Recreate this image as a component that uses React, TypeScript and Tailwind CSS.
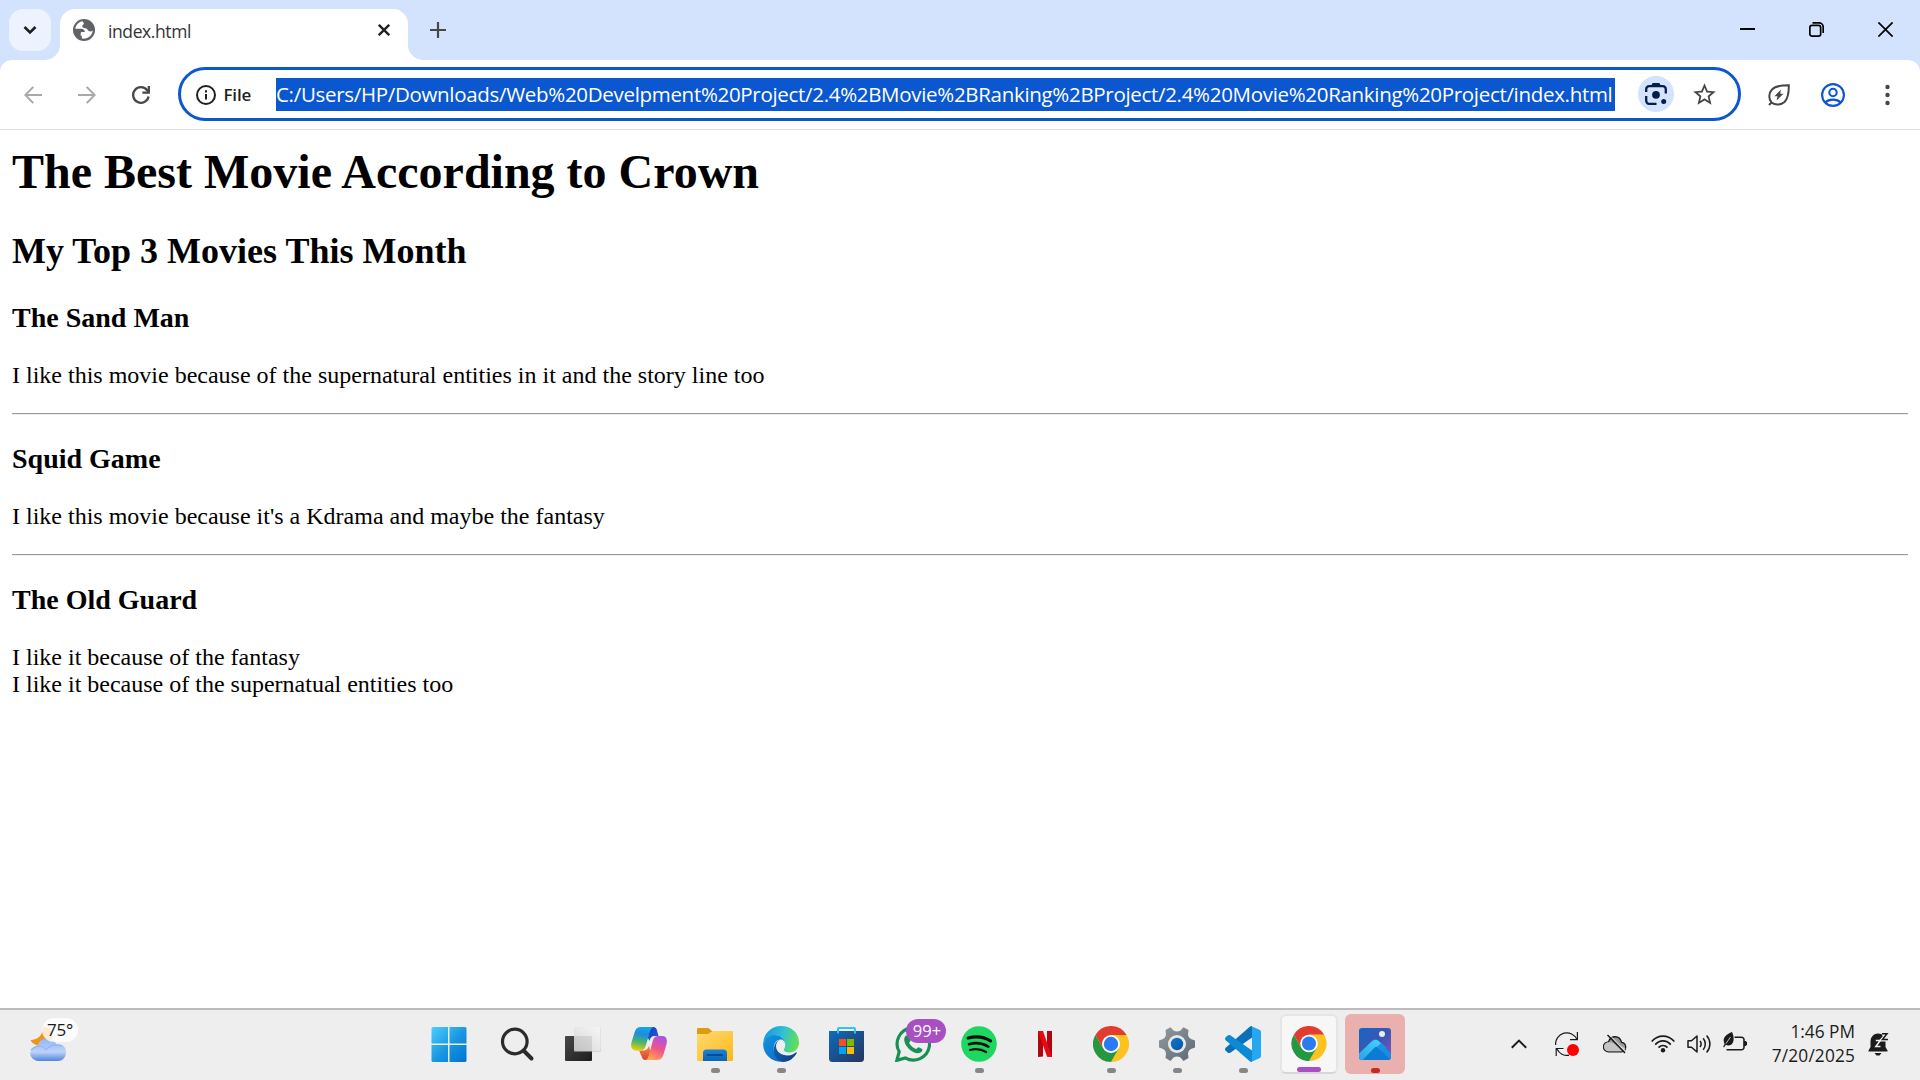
import React from "react";
import { MdStarBorder } from "react-icons/md";

const UI = "font-['Open_Sans','Noto_Sans',sans-serif]";

function GlobeIcon() {
  return (
    <svg className="mb-[9px] ml-[13px]" width="22" height="22" viewBox="0 0 22 22">
      <circle cx="11" cy="11" r="11" fill="#5f6368" />
      <path d="M9.500 2.200C5.500 2.900 2.700 6 2.300 9.800H7.800C10.500 9.800 12 11.400 11.800 13H8.800C8 13 7.700 13.600 7.700 14.500V16C7.700 16.600 8.200 16.800 8.800 16.800V19.500C14.500 20.500 19.300 16.800 19.700 11.500C18 12.900 15.500 12.600 14.800 11C14 9.200 12.500 9.600 10.900 9C8.800 8 8.900 6.200 10.300 5.500C11.700 4.900 10.500 3.500 9.500 2.200Z" fill="#fff" />
    </svg>
  );
}

function TabStrip() {
  return (
    <div className="flex h-[60px] bg-[#d3e3fd]">
      <div className="ml-[9px] mt-[9px] flex size-[42px] items-center justify-center rounded-[14px] bg-[#ecf2fe]">
        <svg width="14" height="10" viewBox="0 0 14 10" fill="none" stroke="#1f1f1f" strokeWidth="2.6">
          <path d="M1.5 2 7 7.5 12.5 2" />
        </svg>
      </div>
      <div className="relative ml-[9px] mt-[9px] flex h-[51px] w-[348px] items-center rounded-t-[15px] bg-white">
        <svg className="absolute -left-[15px] bottom-0" width="15" height="15" viewBox="0 0 15 15">
          <path d="M15 0V15H0A15 15 0 0 0 15 0Z" fill="#fff" />
        </svg>
        <svg className="absolute -right-[15px] bottom-0" width="15" height="15" viewBox="0 0 15 15">
          <path d="M0 0V15H15A15 15 0 0 1 0 0Z" fill="#fff" />
        </svg>
        <GlobeIcon />
        <span className={`${UI} mb-[7px] ml-[13px] flex-1 text-[17.5px] leading-6 tracking-[-0.4px] text-[#333]`}>
          index.html
        </span>
        <svg className="mb-[9px] mr-[18px]" width="12" height="12" viewBox="0 0 12 12" stroke="#1f1f1f" strokeWidth="2.3">
          <path d="M.8.8 11.2 11.2M11.2.8.8 11.2" />
        </svg>
      </div>
      <svg className="ml-[22px] mt-[22px]" width="16" height="16" viewBox="0 0 16 16" stroke="#474747" strokeWidth="2.2">
        <path d="M8 0V16M0 8H16" />
      </svg>
      <div className="ml-auto flex pr-[27px] pt-[22px]">
        <svg className="mr-[54px]" width="15" height="15" viewBox="0 0 15 15" stroke="#000" strokeWidth="2">
          <path d="M0 7H15" />
        </svg>
        <svg className="mr-[54px]" width="15" height="15" viewBox="0 0 15 15" fill="none" stroke="#000" strokeWidth="1.7">
          <rect x=".85" y="3.3" width="10.8" height="10.8" rx="2.2" />
          <path d="M3.5.9H10A4.2 4.2 0 0 1 14.2 5V11" />
        </svg>
        <svg width="15" height="15" viewBox="0 0 15 15" stroke="#000" strokeWidth="1.7">
          <path d="M.4.4 14.6 14.6M14.6.4.4 14.6" />
        </svg>
      </div>
    </div>
  );
}

function Toolbar() {
  return (
    <div className="h-[70px] bg-[#d3e3fd]">
      <div className="flex h-[70px] items-center rounded-t-[12px] border-b border-[#dfe1e5] bg-white">
        <svg className="ml-[24px]" width="18" height="18" viewBox="0 0 18 18" fill="none" stroke="#a8a8a8" strokeWidth="2">
          <path d="M18 9H1.6M9.3.9 1.3 9 9.3 17.1" />
        </svg>
        <svg className="ml-[36px]" width="18" height="18" viewBox="0 0 18 18" fill="none" stroke="#a8a8a8" strokeWidth="2">
          <path d="M0 9H16.4M8.7.9 16.7 9 8.7 17.1" />
        </svg>
        <svg className="ml-[36px]" width="18" height="18" viewBox="0 0 18 18" fill="none" stroke="#474747" strokeWidth="2.3">
          <path d="M16.6 10.6A7.8 7.8 0 1 1 15.2 4.3L17 6.4" />
          <path d="M16.8 0V6.7H10.4" />
        </svg>
        <div className="mb-[1px] ml-[28px] flex h-[54px] w-[1563px] items-center rounded-full border-[3px] border-[#0b57d0]">
          <svg className="ml-[15px] mt-[1px]" width="20" height="20" viewBox="0 0 20 20" fill="none" stroke="#1f1f1f" strokeWidth="2">
            <circle cx="10" cy="10" r="9" />
            <path d="M10 9V14.5M10 5.2V7.4" />
          </svg>
          <span className={`${UI} ml-[7.500px] mt-[1px] w-[52.500px] text-[17px] font-semibold leading-6 tracking-[-0.2px] text-[#1f1f1f]`}>File</span>
          <div className={`${UI} mt-[1px] h-[33px] w-[1339px] whitespace-nowrap bg-[#0b57d0] text-[20.5px] leading-[32px] tracking-[-0.31px] text-white`}>
            C:/Users/HP/Downloads/Web%20Develpment%20Project/2.4%2BMovie%2BRanking%2BProject/2.4%20Movie%20Ranking%20Project/index.html
          </div>
          <div className="ml-[23px] flex size-[36px] items-center justify-center rounded-full bg-[#d3e3fd]">
            <svg width="22" height="22" viewBox="0 0 22 22" fill="none" stroke="#041e49" strokeWidth="2.3">
              <path d="M1.2 9V6.2A3 3 0 0 1 4.2 3.2H17.8A3 3 0 0 1 20.8 6.2V10.5M1.2 13V17.8A3 3 0 0 0 4.2 20.8H11.5" />
              <path d="M7.5 2.2 8.3 1.2H13.7L14.5 2.2" />
              <circle cx="11" cy="11.8" r="3.9" fill="#041e49" stroke="none" />
              <circle cx="18.7" cy="18.4" r="2.5" fill="#041e49" stroke="none" />
            </svg>
          </div>
          <MdStarBorder className="ml-[16.500px] mt-[1px] size-[27px] text-[#474747]" />
        </div>
        <svg className="ml-[27px]" width="22" height="22" viewBox="0 0 22 22" fill="none" stroke="#474747" strokeWidth="2">
          <path d="M3.5 18.5C.5 15 .5 9 4 5.500C7 2.200 11 1.200 20.800 1.200C21 10 19.500 15 16.500 18C13 21.200 7 21.300 3.500 18.500ZM3.500 18.500 1 21" />
          <path d="M13 5.500 6.500 12.300H9.500L8.500 16.500 15.500 9.800H12.200Z" fill="#474747" stroke="none" />
        </svg>
        <svg className="ml-[31px]" width="24" height="24" viewBox="0 0 24 24" fill="none" stroke="#0b57d0" strokeWidth="2.1">
          <circle cx="12" cy="12" r="10.9" />
          <circle cx="12" cy="9.500" r="3.700" />
          <path d="M4.300 19.500C8 15.700 16 15.700 19.700 19.500" />
        </svg>
        <svg className="ml-[39.500px]" width="5" height="22" viewBox="0 0 5 22" fill="#474747">
          <circle cx="2.500" cy="3" r="2.200" />
          <circle cx="2.500" cy="11" r="2.200" />
          <circle cx="2.500" cy="19" r="2.200" />
        </svg>
      </div>
    </div>
  );
}

function Rule() {
  return <div className="mt-[24px] h-[2px] border-t border-b border-t-[#9a9a9a] border-b-[#eeeeee]" />;
}

function Movie({ title, children }: { title: string; children: React.ReactNode }) {
  return (
    <section>
      <h3 className="text-[28px] font-bold leading-[31px]">{title}</h3>
      <p className="mt-[29px] text-[24px] leading-[27px]">{children}</p>
    </section>
  );
}

function Page() {
  return (
    <main className="h-[878px] bg-white px-[12px] pt-[15px] font-['Liberation_Serif',serif] text-black">
      <h1 className="text-[48px] font-bold leading-[53px]">The Best Movie According to Crown</h1>
      <h2 className="mb-[31px] mt-[33px] text-[36px] font-bold leading-[40px]">My Top 3 Movies This Month</h2>
      <Movie title="The Sand Man">
        I like this movie because of the supernatural entities in it and the story line too
      </Movie>
      <Rule />
      <div className="h-[28px]" />
      <Movie title="Squid Game">I like this movie because it's a Kdrama and maybe the fantasy</Movie>
      <Rule />
      <div className="h-[28px]" />
      <Movie title="The Old Guard">
        I like it because of the fantasy
        <br />I like it because of the supernatual entities too
      </Movie>
    </main>
  );
}

function StartIcon() {
  return (
    <svg width="36" height="36" viewBox="0 0 36 36" className="-ml-[4px]">
      <defs>
        <linearGradient id="win" x1="0" y1="0" x2="36" y2="36" gradientUnits="userSpaceOnUse">
          <stop stopColor="#4fd0ff" />
          <stop offset=".55" stopColor="#1795e0" />
          <stop offset="1" stopColor="#0073d0" />
        </linearGradient>
      </defs>
      <path
        fill="url(#win)"
        d="M2 1H17V17.500H.500V2.500A1.500 1.500 0 0 1 2 1ZM18.500 1H34A1.500 1.500 0 0 1 35.500 2.500V17.500H18.500ZM.500 19H17V36H2A1.500 1.500 0 0 1 .500 34.500ZM18.500 19H35.500V34.500A1.500 1.500 0 0 1 34 36H18.500Z"
      />
    </svg>
  );
}

function SearchIcon() {
  return (
    <svg width="36" height="36" viewBox="0 0 36 36" fill="none" stroke="#2b2b2b" className="ml-[2px]">
      <circle cx="14.800" cy="15.500" r="12.300" strokeWidth="3.200" />
      <path d="M23.500 24.500 31.500 32.500" strokeWidth="4" strokeLinecap="round" />
    </svg>
  );
}

function TaskViewIcon() {
  return (
    <svg width="36" height="36" viewBox="0 0 36 36">
      <defs>
        <linearGradient id="tvd" x1="0" y1="0" x2="1" y2="1">
          <stop stopColor="#484848" />
          <stop offset="1" stopColor="#1d1d1d" />
        </linearGradient>
        <linearGradient id="tvl" x1="1" y1="0" x2="0" y2="1">
          <stop stopColor="#ffffff" />
          <stop offset="1" stopColor="#d8d8d8" />
        </linearGradient>
      </defs>
      <rect x="0" y="10" width="27" height="25" rx="1" fill="url(#tvd)" />
      <rect x="9" y="1" width="27" height="25" rx="1" fill="#bbb" opacity=".5" />
      <rect x="9" y="1" width="26.500" height="24" rx="1" fill="url(#tvl)" opacity=".78" />
    </svg>
  );
}

function CopilotIcon() {
  return (
    <svg width="36" height="36" viewBox="0 0 36 36">
      <defs>
        <linearGradient id="cpa" x1="12" y1="1" x2="8" y2="25" gradientUnits="userSpaceOnUse">
          <stop stopColor="#16a5e8" />
          <stop offset=".3" stopColor="#1c8de0" />
          <stop offset=".62" stopColor="#48b36c" />
          <stop offset="1" stopColor="#f4cf0a" />
        </linearGradient>
        <linearGradient id="cpb" x1="30" y1="10" x2="20" y2="34" gradientUnits="userSpaceOnUse">
          <stop stopColor="#a753e8" />
          <stop offset=".5" stopColor="#f0528a" />
          <stop offset="1" stopColor="#ffa84e" />
        </linearGradient>
        <linearGradient id="cpc" x1="0" y1="0" x2="1" y2="1">
          <stop stopColor="#1a35c0" />
          <stop offset="1" stopColor="#1a66dc" />
        </linearGradient>
        <linearGradient id="cpd" x1="0" y1="0" x2="0" y2="1">
          <stop stopColor="#f78a3a" />
          <stop offset="1" stopColor="#dd4038" />
        </linearGradient>
      </defs>
      <path d="M17 1H22C24.500 1 25.500 2.500 26 4.500L27.500 10H24C20.500 10 19.500 11.500 18.500 15L16 10Z" fill="url(#cpc)" />
      <path d="M8 24.500H12C15.500 24.500 17 23 18 19.500L19.500 26 16.500 34H14.500C12 34 11 32 10.500 30Z" fill="url(#cpd)" />
      <path d="M10 1H23.500C20.500 1 19.600 3.500 18.500 7L15 19C14 22.500 12.500 24.700 9 24.700H5.500C1 24.700-.800 21 .600 16L3.500 6.500C4.700 2.800 6.500 1 10 1Z" fill="url(#cpa)" />
      <path d="M26 34H13.500C16.500 34 17.300 31.500 18.200 28L21.500 16C22.500 12 23.700 10 27.500 10H31C35.500 10 36.700 13.500 35.400 18.500L32.500 28.500C31.300 32.200 29.500 34 26 34Z" fill="url(#cpb)" />
    </svg>
  );
}

function ExplorerIcon() {
  return (
    <svg width="36" height="36" viewBox="0 0 36 36">
      <defs>
        <linearGradient id="fold" x1="0" y1="0" x2="1" y2="1">
          <stop stopColor="#ffd976" />
          <stop offset="1" stopColor="#fdb913" />
        </linearGradient>
        <linearGradient id="foldb" x1="0" y1="0" x2="0" y2="1">
          <stop stopColor="#1485dc" />
          <stop offset="1" stopColor="#0c63b4" />
        </linearGradient>
      </defs>
      <path d="M0 3A1 1 0 0 1 1 2H11.500L15 5V8H0Z" fill="#dc9c0c" />
      <path d="M0 8H11L15.500 5H35A1 1 0 0 1 36 6V34A1 1 0 0 1 35 35H1A1 1 0 0 1 0 34Z" fill="url(#fold)" />
      <path d="M6 35V27A3.500 3.500 0 0 1 9.500 23.500H26.500A3.500 3.500 0 0 1 30 27V35Z" fill="url(#foldb)" />
      <path d="M10.500 29H25" stroke="#0b4a92" strokeWidth="1.800" strokeLinecap="round" />
    </svg>
  );
}

function EdgeIcon() {
  return (
    <svg width="36" height="36" viewBox="0 0 36 36">
      <defs>
        <linearGradient id="ega" x1="2" y1="8" x2="35" y2="18" gradientUnits="userSpaceOnUse">
          <stop stopColor="#199ae0" />
          <stop offset=".5" stopColor="#30c2d2" />
          <stop offset="1" stopColor="#67e04c" />
        </linearGradient>
        <linearGradient id="egb" x1="0" y1="12" x2="16" y2="34" gradientUnits="userSpaceOnUse">
          <stop stopColor="#1193e0" />
          <stop offset="1" stopColor="#0c6fca" />
        </linearGradient>
        <linearGradient id="egc" x1="12" y1="20" x2="32" y2="32" gradientUnits="userSpaceOnUse">
          <stop stopColor="#0d61ae" />
          <stop offset="1" stopColor="#114088" />
        </linearGradient>
      </defs>
      <path d="M.200 16C1.200 7 8.500 0 18 0C28.500 0 36 7 36 16.500C36 22.500 32 26.500 26.500 26.500C23.500 26.500 20.800 25.300 20.800 23.800C20.800 23 22.200 22 22.200 19C22.200 13.500 18 9.200 11.500 9.200C6.500 9.200 2.500 12 .200 16Z" fill="url(#ega)" />
      <path d="M.200 17C2 11.500 6.500 9 11.500 9C18 9 22.200 13.500 22.200 18.500C22.200 15.500 20 13.600 17.500 13.600C13 13.600 10.300 18.500 10.800 24C11.400 30 16 34.500 21.500 35.600C10 37.500-.800 28.500.200 17Z" fill="url(#egb)" />
      <path d="M17.500 13.700C14.800 14.300 13 17 13 20C13 25.500 18 29.500 25 29.500C28.500 29.500 31 28 32.800 26.500C33.500 26 34 26.500 33.600 27.200C31 32 26 36 20 35.900C14 34.500 10.500 29.500 10.700 24C10.900 18.500 13.500 14 17.500 13.700Z" fill="url(#egc)" />
    </svg>
  );
}

function StoreIcon() {
  return (
    <svg width="36" height="36" viewBox="0 0 36 36">
      <defs>
        <linearGradient id="sto" x1="0" y1="0" x2="1" y2="1">
          <stop stopColor="#0c6bbd" />
          <stop offset="1" stopColor="#28355c" />
        </linearGradient>
      </defs>
      <path d="M0 5H35V32.500A3.500 3.500 0 0 1 31.500 36H3.500A3.500 3.500 0 0 1 0 32.500Z" fill="url(#sto)" />
      <path d="M9 7.500V2.900A.900.900 0 0 1 9.900 2H25.100A.900.900 0 0 1 26 2.900V7.500" fill="none" stroke="#2fc4f7" strokeWidth="2" />
      <path d="M10 13H17V20H10Z" fill="#f25022" />
      <path d="M18 13H25V20H18Z" fill="#7fba00" />
      <path d="M10 21H17V28H10Z" fill="#00a4ef" />
      <path d="M18 21H25V28H18Z" fill="#ffb900" />
    </svg>
  );
}

function WhatsAppIcon() {
  return (
    <div className="relative size-[36px]">
      <svg width="36" height="36" viewBox="0 0 36 36">
        <path d="M1.800 34.400 4.200 25.800A16.200 16.200 0 1 1 10.200 31.900Z" fill="none" stroke="#1a8f55" strokeWidth="3.200" />
        <path d="M10 10.500C11.500 8.800 13.400 8.900 14.200 10.500L15.600 13.800C16 15 14.500 16 14.100 17C16 20 18 21.700 21 23C22 22.800 22.700 21 23.800 21.200L27.200 22.900C28 23.500 27 25.800 25.600 26.600C22.500 28.300 17.500 26.500 14 23C10.500 19.500 7.800 14 10 10.500Z" fill="#1a8f55" />
      </svg>
      <span className={`${UI} absolute -top-[7px] left-[11px] flex h-[24px] w-[40px] items-center justify-center rounded-full bg-[#a94fc4] pl-[2px] text-[16.5px] leading-none text-white`}>
        99+
      </span>
    </div>
  );
}

function SpotifyIcon() {
  return (
    <svg width="36" height="36" viewBox="0 0 36 36" fill="none" stroke="#111" strokeLinecap="round">
      <circle cx="18" cy="18" r="17.800" fill="#1ed760" stroke="none" />
      <path d="M7.200 12C14.500 10 23 10.800 29.500 14.800" strokeWidth="3.200" />
      <path d="M8 18.200C14.500 16.300 21.500 17.200 27.300 20.600" strokeWidth="2.700" />
      <path d="M9 24C14.500 22.500 20 23 25.200 26" strokeWidth="2.200" />
    </svg>
  );
}

function NetflixIcon() {
  return (
    <svg width="14" height="26" viewBox="0 0 14 26">
      <path d="M0 0H5V25.600L0 26Z" fill="#b1060f" />
      <path d="M9 0H14V26L9 25.600Z" fill="#b1060f" />
      <path d="M0 0H5L14 26 9 25.600Z" fill="#e50914" />
    </svg>
  );
}

function ChromeIcon() {
  return (
    <svg width="36" height="36" viewBox="0 0 36 36">
      <path d="M2.400 9A18 18 0 0 1 33.600 9H18L10.200 22.500Z" fill="#e33b2e" />
      <path d="M33.600 9A18 18 0 0 1 18 36L25.800 22.500 18 9Z" fill="#fcc31e" />
      <path d="M18 36A18 18 0 0 1 2.400 9L10.200 22.500 25.800 22.500Z" fill="#25973f" />
      <circle cx="18" cy="18" r="9" fill="#fff" />
      <circle cx="18" cy="18" r="7.200" fill="#2b7bf0" />
    </svg>
  );
}

function SettingsIcon() {
  return (
    <svg width="36" height="36" viewBox="0 0 36 36">
      <defs>
        <linearGradient id="gear" x1="0" y1="0" x2="1" y2="1">
          <stop stopColor="#94999e" />
          <stop offset="1" stopColor="#5c6975" />
        </linearGradient>
        <linearGradient id="gearb" x1="0" y1="0" x2="1" y2="1">
          <stop stopColor="#1078cf" />
          <stop offset="1" stopColor="#0b559d" />
        </linearGradient>
      </defs>
      <path
        d="M6.500 4 11.500 1.200 14.500 4.500Q18 6.300 21.500 4.500L24.500 1.200 29.500 4 29 8.500Q29.500 12.300 32.500 13.300L36 14.500V21.500L32.500 22.700Q29.500 23.700 29 27.500L29.500 32 24.500 34.900 21.500 31.500Q18 29.700 14.500 31.500L11.500 34.900 6.500 32 7 27.500Q6.500 23.700 3.500 22.700L0 21.500V14.500L3.500 13.300Q6.500 12.300 7 8.500Z"
        fill="url(#gear)"
      />
      <circle cx="18" cy="18" r="9" fill="#e8e8e8" />
      <circle cx="18" cy="18" r="6.200" fill="url(#gearb)" />
    </svg>
  );
}

function CodeIcon() {
  return (
    <svg width="36" height="36" viewBox="0 0 36 36">
      <path d="M27 0V11.500L5.300 26.700C4.400 27.300 3.400 27.200 2.600 26.500L.700 24.700C-.200 23.800-.200 22.600.700 21.800L24.800.700C25.500.100 26.200-.100 27 0Z" fill="#0a71b8" />
      <path d="M27 36V24.500L5.300 9.300C4.400 8.700 3.400 8.800 2.600 9.500L.700 11.300C-.200 12.200-.200 13.400.700 14.200L24.800 35.300C25.500 35.900 26.200 36.100 27 36Z" fill="#0d8ad4" />
      <path d="M26 0 34.500 3.700C35.500 4.200 36 5 36 6V30C36 31 35.500 31.800 34.500 32.300L26 36C26.700 35.500 27 34.500 27 33.500V2.500C27 1.500 26.700.500 26 0Z" fill="#27a7f2" />
    </svg>
  );
}

function PhotosIcon() {
  return (
    <svg width="32" height="32" viewBox="0 0 32 32">
      <defs>
        <linearGradient id="pha" x1="0" y1="0" x2="1" y2="1">
          <stop stopColor="#1267c4" />
          <stop offset=".5" stopColor="#3b57b3" />
          <stop offset="1" stopColor="#8654c0" />
        </linearGradient>
        <linearGradient id="phb" x1="0" y1="1" x2="1" y2="0">
          <stop stopColor="#2aa4ea" />
          <stop offset="1" stopColor="#41d9fb" />
        </linearGradient>
        <clipPath id="phc">
          <rect width="32" height="32" rx="3" />
        </clipPath>
      </defs>
      <g clipPath="url(#phc)">
        <rect width="32" height="32" fill="url(#pha)" />
        <path d="M3 32 18 16.500 32 28V32Z" fill="#0d7bd6" />
        <path d="M0 25.500 12.500 13.500C15 11.200 18 11.200 20.300 13.500L27 20 22 22.500 19 19.500C17.800 18.400 16.800 18.500 15.700 19.600L3.500 32H0Z" fill="url(#phb)" />
        <path d="M22 15.200 32 25.500V32L18.200 18.800Z" fill="#198fe0" />
        <circle cx="23" cy="6" r="3" fill="#e9eefb" />
      </g>
    </svg>
  );
}

type App = { id: string; icon: React.ReactNode; running?: boolean };

const apps: App[] = [
  { id: "start", icon: <StartIcon /> },
  { id: "search", icon: <SearchIcon /> },
  { id: "tasks", icon: <TaskViewIcon /> },
  { id: "copilot", icon: <CopilotIcon /> },
  { id: "explorer", icon: <ExplorerIcon />, running: true },
  { id: "edge", icon: <EdgeIcon />, running: true },
  { id: "store", icon: <StoreIcon /> },
  { id: "whatsapp", icon: <WhatsAppIcon /> },
  { id: "spotify", icon: <SpotifyIcon />, running: true },
  { id: "netflix", icon: <NetflixIcon /> },
  { id: "chrome", icon: <ChromeIcon />, running: true },
  { id: "settings", icon: <SettingsIcon />, running: true },
  { id: "code", icon: <CodeIcon />, running: true },
];

function Weather() {
  return (
    <div className="relative ml-[30px] mt-[8px] h-[44px] w-[50px]">
      <svg width="50" height="44" viewBox="0 0 50 44">
        <defs>
          <linearGradient id="cld" x1="0" y1="0" x2="0" y2="1">
            <stop stopColor="#8fb6f4" />
            <stop offset=".6" stopColor="#bcd3f8" />
            <stop offset="1" stopColor="#4f84de" />
          </linearGradient>
        </defs>
        <path d="M.500 22C8 22 13 17 13 9C19 9 24 14 22 21L12 28C7 28 2.500 26 .500 22Z" fill="#f0951c" />
        <path d="M9 43A8.800 7.500 0 0 1 2 31C4 28.500 6 28.300 7.500 28.300C9 22.500 13 20.500 17 20.500C21 20.500 25 22.500 26.500 26.500C32 25.500 36 29 36 34C36 40 32 43 28 43Z" fill="url(#cld)" />
        <path d="M1 32C7 26 14 28 16 32C20 27 26 26 32 28" fill="none" stroke="#8fb5f0" strokeWidth="1.200" />
      </svg>
      <span className={`${UI} absolute left-[12px] top-0 flex h-[24px] w-[36px] items-center justify-center rounded-full bg-white/80 pb-[1px] text-[17px] leading-none tracking-[-0.3px] text-[#1b1b1b]`}>
        75°
      </span>
    </div>
  );
}

function Tray() {
  return (
    <div className="ml-auto flex h-[68px] items-center pr-[31px]">
      <svg className="mr-[28px]" width="16" height="10" viewBox="0 0 16 10" fill="none" stroke="#1b1b1b" strokeWidth="2">
        <path d="M.800 8.800 8 1.600 15.200 8.800" />
      </svg>
      <svg className="mr-[24px]" width="24" height="24" viewBox="0 0 24 24" fill="none" stroke="#1b1b1b" strokeWidth="1.200">
        <path d="M.600 13A11.200 11.200 0 0 1 22 7.500M22.400 0V7.700H15" />
        <path d="M1.200 24V16.500H8.500M2 17A11.200 11.200 0 0 0 14 23.300" />
        <circle cx="18" cy="18" r="6" fill="#f00" stroke="none" />
      </svg>
      <svg className="mr-[24px]" width="24" height="20" viewBox="0 0 24 20" fill="none" stroke="#1b1b1b" strokeWidth="1.300">
        <path d="M5.500 17.800A5 5 0 0 1 5.500 7.800C8 1 16.500 1 18.600 8.300A4.800 4.800 0 0 1 18.600 17.800Z" fill="#999" />
        <path d="M5 17.200A4.400 4.400 0 0 1 6 8.200C9 8 12 9.500 14 12.300C17 11.500 20.500 12.500 22.500 14.500C21.500 16.500 20.500 17.200 18.600 17.200Z" fill="#c4c4c4" stroke="none" />
        <path d="M5.800.200 23.300 18.200" stroke="#eee" strokeWidth="1" />
        <path d="M4.500 1 22 19" strokeWidth="1.500" />
      </svg>
      <svg className="mr-[12px]" width="24" height="18" viewBox="0 0 24 18" fill="none" stroke="#1b1b1b" strokeWidth="1.700">
        <path d="M.700 6.500C7-.700 17-.700 23.300 6.500" />
        <path d="M4.200 9.600C8.800 4.600 15.200 4.600 19.800 9.600" />
        <path d="M7.500 12.600C10.200 9.800 13.800 9.800 16.500 12.600" />
        <circle cx="12" cy="15.300" r="2.200" fill="#1b1b1b" stroke="none" />
      </svg>
      <svg className="mr-[12px]" width="24" height="20" viewBox="0 0 24 20" fill="none" stroke="#1b1b1b" strokeWidth="1.500">
        <path d="M1 6.800H4.500L10 2V18L4.500 13.200H1Z" strokeLinejoin="round" />
        <path d="M13 7C14.400 8.800 14.400 11.200 13 13M16.200 4.200C19 7.600 19 12.400 16.200 15.800M19.600 1.500C24 6.500 24 13.500 19.600 18.500" />
      </svg>
      <svg className="mb-[4px]" width="24" height="20" viewBox="0 0 24 20" fill="none" stroke="#1b1b1b" strokeWidth="1.600">
        <path d="M11.500 5.300H18.500A2.500 2.500 0 0 1 21 7.800V15.200A2.500 2.500 0 0 1 18.500 17.700H3.500" />
        <path d="M21 9H22.500L24 10V13L22.500 14H21Z" fill="#1b1b1b" stroke="none" />
        <path d="M9 0C11 4 11.500 10 8.500 12.500C6.500 14 4 13.800 2.800 12.800L1 15.500.200 14.500 1.600 12C-1 6.500 2 3 9 0Z" fill="#1b1b1b" stroke="none" />
        <path d="M7.500 5 3 11.500" stroke="#eee" strokeWidth=".8" />
      </svg>
      <div className={`${UI} w-[108px] text-right text-[17.300px] leading-[24px] text-[#1b1b1b]`}>
        <div>1:46 PM</div>
        <div className="tracking-[0.15px]">7/20/2025</div>
      </div>
      <svg className="ml-[13px]" width="21" height="24" viewBox="0 0 21 24">
        <path d="M2.500 10C2.500 4.500 6 1.500 10 1.500C14.500 1.500 17.500 4.500 17.500 10V15L19.500 18.500V19.500H.500V18.500L2.500 15Z" fill="#1b1b1b" />
        <path d="M6.500 21H13.500L11.500 23.500H8.500Z" fill="#1b1b1b" />
        <path d="M7.800 8.500H12.300L7.800 14.500H12.500" fill="none" stroke="#eee" strokeWidth="1.500" />
        <path d="M14 1.800H19.500L14.500 7.500H20.500" fill="none" stroke="#eee" strokeWidth="4" />
        <path d="M14 1.800H19L14.500 7.500H20" fill="none" stroke="#1b1b1b" strokeWidth="1.500" />
      </svg>
    </div>
  );
}

function Taskbar() {
  return (
    <footer className="flex h-[72px] border-t-2 border-[#bcbcbc] bg-[#eeeeee]">
      <div className="w-[418px]">
        <Weather />
      </div>
      {apps.map((app) => (
        <div key={app.id} className="flex w-[66px] flex-col items-center pt-[16px]">
          <div className="flex h-[36px] items-center">{app.icon}</div>
          {app.running && <div className="mt-[6px] h-[5px] w-[9px] rounded-full bg-[#868686]" />}
        </div>
      ))}
      <div className="ml-[4px] mt-[4px] flex h-[60px] w-[58px] flex-col items-center rounded-[6px] border-2 border-[#e5e5e5] border-b-[#d6d6d6] bg-[#f7f7f7] pt-[10px]">
        <ChromeIcon />
        <div className="mt-[6px] h-[5px] w-[24px] rounded-full bg-[#a94fc4]" />
      </div>
      <div className="ml-[7px] mt-[4px] flex h-[60px] w-[60px] flex-col items-center rounded-[6px] bg-[#e9b0ad] pt-[14px]">
        <PhotosIcon />
        <div className="mt-[8px] h-[5px] w-[9px] rounded-full bg-[#c42b1c]" />
      </div>
      <Tray />
    </footer>
  );
}

export default function App() {
  return (
    <div className="h-[1080px] w-[1920px] overflow-hidden bg-white">
      <TabStrip />
      <Toolbar />
      <Page />
      <Taskbar />
    </div>
  );
}
